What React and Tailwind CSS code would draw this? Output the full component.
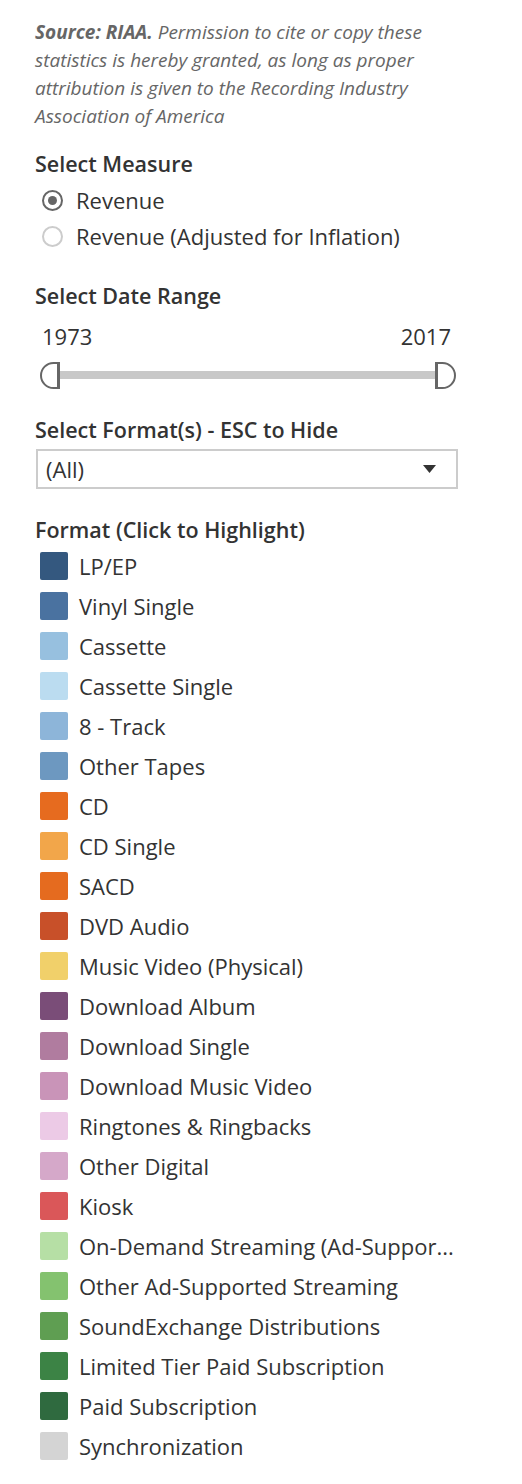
import React, { useState } from 'react';

// Legend colours sampled from the reference
const FORMATS = [
  { name: "LP/EP", color: "bg-[#34587f]" },
  { name: "Vinyl Single", color: "bg-[#4a72a0]" },
  { name: "Cassette", color: "bg-[#97c0df]" },
  { name: "Cassette Single", color: "bg-[#bbdcf0]" },
  { name: "8 - Track", color: "bg-[#8db5d9]" },
  { name: "Other Tapes", color: "bg-[#6d98c0]" },
  { name: "CD", color: "bg-[#e66b1f]" },
  { name: "CD Single", color: "bg-[#f2a64a]" },
  { name: "SACD", color: "bg-[#e56b1f]" },
  { name: "DVD Audio", color: "bg-[#c85029]" },
  { name: "Music Video (Physical)", color: "bg-[#f1d06a]" },
  { name: "Download Album", color: "bg-[#7a4d78]" },
  { name: "Download Single", color: "bg-[#b07c9f]" },
  { name: "Download Music Video", color: "bg-[#c994b8]" },
  { name: "Ringtones & Ringbacks", color: "bg-[#eccae6]" },
  { name: "Other Digital", color: "bg-[#d5a8c9]" },
  { name: "Kiosk", color: "bg-[#da5759]" },
  { name: "On-Demand Streaming (Ad-Suppor...", color: "bg-[#b6dfa5]" },
  { name: "Other Ad-Supported Streaming", color: "bg-[#84c26f]" },
  { name: "SoundExchange Distributions", color: "bg-[#5f9e52]" },
  { name: "Limited Tier Paid Subscription", color: "bg-[#3c8345]" },
  { name: "Paid Subscription", color: "bg-[#2f6a3f]" },
  { name: "Synchronization", color: "bg-[#d4d4d4]" },
];

const MEASURES = ["Revenue", "Revenue (Adjusted for Inflation)"];

export default function App() {
  const [measure, setMeasure] = useState(0);

  return (
    <div className="w-[522px] min-h-[1484px] bg-white pl-[35px] pr-[40px] text-[#333] font-['Open_Sans','Noto_Sans',sans-serif]">
      <p className="pt-[18px] text-[19px] leading-[28px] italic text-[#666] whitespace-nowrap">
        <span className="font-bold">Source: RIAA.</span> Permission to cite or copy these<br />
        statistics is hereby granted, as long as proper<br />
        attribution is given to the Recording Industry<br />
        Association of America
      </p>

      <div className="mt-[20px] h-[28px] flex items-center text-[21.5px] font-semibold">Select Measure</div>
      <div className="mt-[4px]">
        {MEASURES.map((m, i) => (
          <button key={m} onClick={() => setMeasure(i)} className="h-[36px] flex items-center gap-[13px] pl-[7px] text-[22px]">
            <span className={`w-[21px] h-[21px] rounded-full border-2 flex items-center justify-center ${measure === i ? 'border-[#666]' : 'border-[#ccc]'}`}>
              {measure === i && <span className="w-[9px] h-[9px] rounded-full bg-[#666]" />}
            </span>
            <span>{m}</span>
          </button>
        ))}
      </div>

      <div className="mt-[28px] h-[28px] flex items-center text-[21.5px] font-semibold">Select Date Range</div>
      <div className="mt-[12px] h-[28px] flex items-center justify-between pl-[7px] pr-[31px] text-[22px]">
        <span>1973</span>
        <span>2017</span>
      </div>
      <div className="mt-[11px] h-[28px] flex items-center pl-[5px] pr-[26px]">
        <div className="w-[20px] h-[27px] border-2 border-r-[3px] border-[#666] rounded-l-full" />
        <div className="flex-1 h-[8px] bg-[#c8c8c8]" />
        <div className="w-[21px] h-[27px] border-2 border-l-[3px] border-[#666] rounded-r-full" />
      </div>

      <div className="mt-[27px] h-[28px] flex items-center text-[21.5px] font-semibold">Select Format(s) - ESC to Hide</div>
      <div className="mt-[5px] ml-[1px] mr-[24px] h-[40px] border-2 border-[#ccc] flex items-center justify-between pl-[8px] pr-[20px] text-[22px]">
        <span>(All)</span>
        <svg width="13" height="8" viewBox="0 0 13 8"><path d="M0 0H13L6.5 8Z" fill="#333" /></svg>
      </div>

      <div className="mt-[27px] h-[28px] flex items-center text-[21.5px] font-semibold">Format (Click to Highlight)</div>
      <ul className="mt-[2px]">
        {FORMATS.map((f) => (
          <li key={f.name} className="h-[40px] flex items-center gap-[11px] pl-[5px] text-[22px] whitespace-nowrap">
            <span className={`w-[28px] h-[28px] rounded-[2px] shrink-0 ${f.color}`} />
            <span>{f.name}</span>
          </li>
        ))}
      </ul>
    </div>
  );
}
